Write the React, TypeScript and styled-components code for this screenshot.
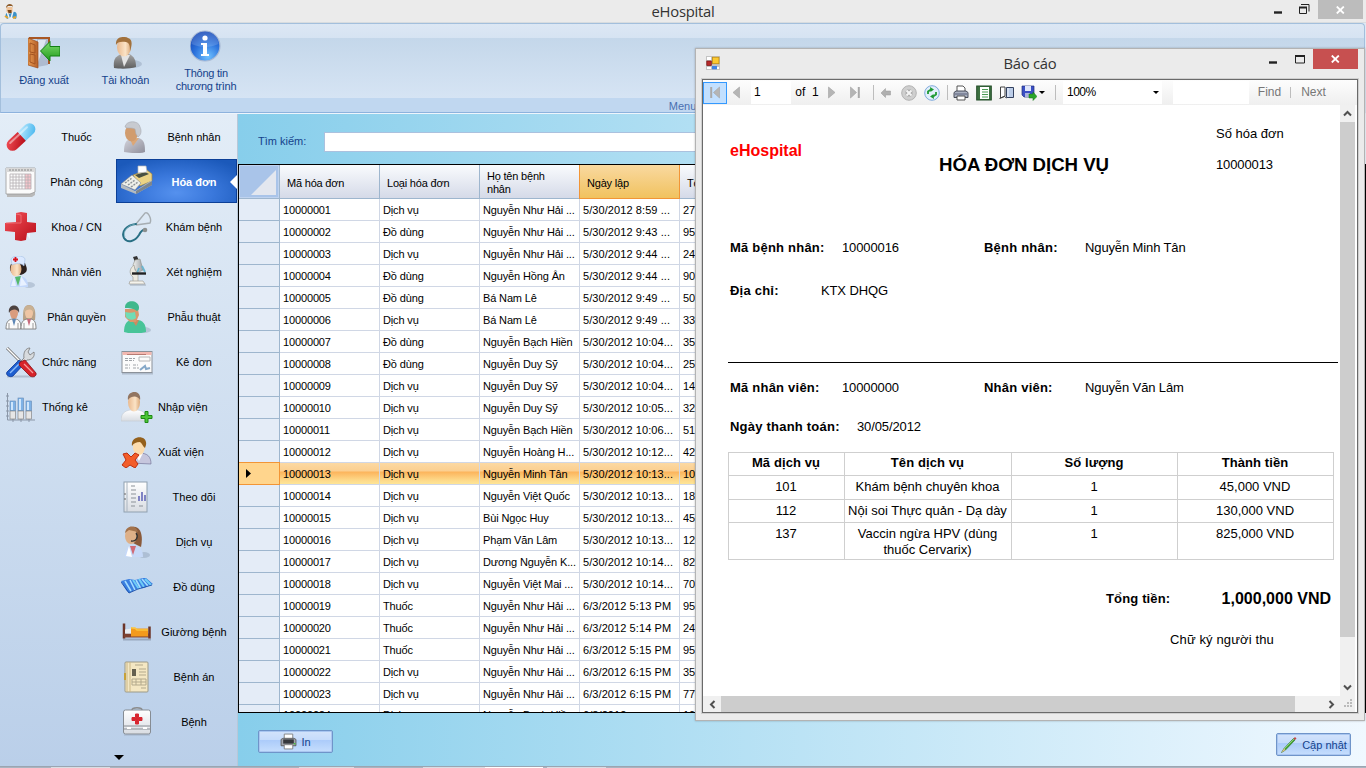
import React from 'react';
import styled, { createGlobalStyle, css } from 'styled-components';

const Global = createGlobalStyle`
  *, *::before, *::after { box-sizing: border-box; }
  html, body { margin: 0; padding: 0; overflow: hidden; }
  body { font: 11px/13px "Liberation Sans", Arial, sans-serif; color: #000; }
  svg { display: block; flex: none; }
`;

/* ---------- shell ---------- */
const Shell = styled.div`
  position: relative;
  width: 1366px;
  height: 768px;
  display: flex;
  flex-direction: column;
  overflow: hidden;
  background: #dfe9f5;
`;
const TitleBar = styled.header`
  height: 23px;
  flex: none;
  display: grid;
  grid-template-columns: 140px 1fr 140px;
  background: #ebebeb;
  border-bottom: 1px solid #d8dcdf;
`;
const TitleText = styled.h1<{ $line?: number }>`
  margin: 0;
  font: 400 14.8px/${p => p.$line ?? 23}px "Open Sans", "Noto Sans", sans-serif;
  letter-spacing: -0.25px;
  text-align: center;
  color: #333;
`;
const AppIconSlot = styled.div<{ $top?: number }>`
  padding: ${p => p.$top ?? 3}px 0 0 4px;
`;
const WinButtons = styled.div`
  display: flex;
  justify-content: flex-end;
`;
const CloseBox = styled.div<{ $bg: string; $w: number; $h: number }>`
  width: ${p => p.$w}px;
  height: ${p => p.$h}px;
  background: ${p => p.$bg};
  display: flex;
  align-items: center;
  justify-content: center;
`;
const WinGlyph = styled.div<{ $w: number; $pt: number }>`
  width: ${p => p.$w}px;
  padding-top: ${p => p.$pt}px;
  display: flex;
  justify-content: center;
`;

/* ---------- ribbon ---------- */
const Ribbon = styled.nav`
  height: 90px;
  flex: none;
  margin-right: 1px;
  border: 1px solid #a3bfdc;
  border-bottom-color: #8db2dd;
  border-radius: 4px 4px 0 0;
  display: flex;
  flex-direction: column;
  background: linear-gradient(#dce7f4 0, #d6e3f2 14px, #c4d7ea 14px, #d6e4f4 74px);
`;
const RibbonItems = styled.div`
  flex: 1;
  display: flex;
  padding-left: 2px;
`;
const RibbonButton = styled.div<{ $w: number; $top: number; $tight?: boolean }>`
  width: ${p => p.$w}px;
  padding-top: ${p => p.$top}px;
  display: flex;
  flex-direction: column;
  align-items: center;
  gap: 5px;
  color: #15428b;
  font-size: 11px;
  text-align: center;
  white-space: pre;
  letter-spacing: ${p => (p.$tight ? -0.25 : -0.05)}px;
`;
const RibbonCaption = styled.div`
  height: 14px;
  background: #c0d7f0;
  color: #4a6fb0;
  text-align: center;
  font-size: 11px;
  line-height: 16px;
`;

/* ---------- body ---------- */
const Body = styled.div`
  flex: 1;
  min-height: 0;
  display: flex;
  border-top: 1px solid #eef5fc;
`;
const Sidebar = styled.aside`
  width: 237px;
  flex: none;
  display: flex;
  flex-direction: column;
  background: linear-gradient(#e3edf7, #bacfe9);
`;
const NavColumns = styled.div`
  display: grid;
  grid-template-columns: 116px 121px;
  align-items: start;
`;
const NavColumn = styled.ul`
  margin: 0;
  padding: 0;
  list-style: none;
`;
const NavItem = styled.li<{ $active?: boolean }>`
  position: relative;
  height: 45px;
  display: flex;
  align-items: center;
  padding-left: 5px;
  white-space: nowrap;
  border: 1px solid transparent;
  border-left: 0;
  ${p => p.$active && css`
    color: #fff;
    font-weight: 700;
    height: 44px;
    margin-bottom: 1px;
    border: 1px solid #0b3f97;
    padding-left: 4px;
    background: radial-gradient(ellipse 80px 38px at 50% 78%, #5591ee, #3a78dc 45%, #1b59ba);
  `}
`;
const NavLabel = styled.span<{ $left?: boolean; $second?: boolean }>`
  width: ${p => (p.$second ? 72 : 69)}px;
  margin-left: 5px;
  padding-top: 2px;
  display: flex;
  justify-content: ${p => (p.$left ? 'flex-start' : 'center')};
`;
const ActivePointer = styled.i`
  position: absolute;
  right: -1px;
  top: 15px;
  border: 7px solid transparent;
  border-left: 0;
  border-right: 7px solid #fff;
`;
const MoreArrow = styled.i`
  margin: 11px 0 0 114px;
  width: 0;
  border: 5px solid transparent;
  border-bottom: 0;
  border-top-color: #000;
`;

const Main = styled.main`
  flex: 1;
  min-width: 0;
  display: flex;
  flex-direction: column;
  border-left: 1px solid #b8c8d8;
  background: linear-gradient(90deg, #87ceeb, #f0f8ff);
`;
const SearchBar = styled.div`
  height: 50px;
  flex: none;
  display: flex;
  align-items: center;
  padding: 6px 0 1px 20px;
  color: #15428b;
`;
const SearchLabel = styled.label`
  width: 66px;
`;
const SearchInput = styled.div`
  width: 700px;
  height: 20px;
  background: #fff;
  border: 1px solid #abc1de;
`;
const Grid = styled.section`
  height: 549px;
  flex: none;
  border: 1px solid #000;
  background: #fff;
  overflow: hidden;
`;
const GridRow = styled.div<{ $sel?: boolean }>`
  display: grid;
  grid-template-columns: 41px 100px 100px 100px 100px 1fr;
  height: 22px;
  background: ${p => (p.$sel
    ? 'linear-gradient(#fcd9a3 0, #fbcf90 8px, #fcb45c 9px, #fdd889 17px, #fee596 21px)'
    : '#fff')};
`;
const GridHead = styled(GridRow)`
  height: 34px;
`;
const HeadCell = styled.div<{ $hot?: boolean }>`
  display: flex;
  align-items: center;
  padding: 3px 0 0 7px;
  line-height: 13px;
  letter-spacing: -0.2px;
  border-right: 1px solid #9eb6ce;
  border-bottom: 1px solid #9eb6ce;
  background: linear-gradient(#f9fbfd, #d5dae8);
  ${p => p.$hot && css`
    border-color: #f29536;
    background: linear-gradient(#f9d9a0, #f1c25f);
    box-shadow: -1px 0 #f29536;
  `}
`;
const CornerCell = styled.div`
  background: #a9c4e9;
  border: solid #9eb6ce;
  border-width: 0 1px 1px 0;
  box-shadow: inset 0 0 0 1px #bfd3ef;
  padding: 5px 0 0 12px;
`;
const RowHandle = styled.div<{ $sel?: boolean }>`
  background: ${p => (p.$sel ? '#ffd58d' : '#e4ecf7')};
  border: solid ${p => (p.$sel ? '#f29536' : '#9eb6ce')};
  border-width: 0 1px 1px 0;
  box-shadow: ${p => (p.$sel ? '0 -1px #f29536' : 'none')};
  display: flex;
  align-items: center;
  padding-left: 7px;
`;
const Cell = styled.div<{ $ls?: number }>`
  padding: 5px 0 0 3px;
  line-height: 13px;
  border: solid #d0d7e5;
  border-width: 0 1px 1px 0;
  overflow: hidden;
  white-space: nowrap;
  letter-spacing: ${p => p.$ls ?? -0.14}px;
  ${GridRow}:last-child > & { padding-top: 4px; }
`;
const BottomBar = styled.div`
  flex: 1;
  display: flex;
  justify-content: space-between;
  align-items: flex-start;
  padding: 17px 15px 0 20px;
`;
const BlueButton = styled.div<{ $w: number; $down?: number }>`
  width: ${p => p.$w}px;
  height: 23px;
  margin-top: ${p => p.$down ?? 0}px;
  border: 1px solid #6f94c9;
  border-radius: 2px;
  box-shadow: inset 0 0 0 1px #a9c6f0;
  background: linear-gradient(#d3e3fb 0, #c5dbfb 9px, #abcbfa 9px, #c6defd);
  color: #15428b;
  line-height: 15px;
  display: flex;
  align-items: center;
  justify-content: center;
  gap: 4px;
`;
const ButtonLabel = styled.span`
  padding-top: 2px;
`;
const StatusStrip = styled.footer`
  height: 2px;
  flex: none;
  border-top: 1px solid #9ba5b1;
  background: linear-gradient(90deg, #aab4c0 51px, #d9dee4 51px 110px, #aab4c0 110px 299px, #d9dee4 299px 354px, #aab4c0 354px 423px, #d9dee4 423px 485px, #fff 485px 543px, #aab4c0 543px 547px, #d9dee4 547px 606px, #aab4c0 606px);
`;

/* ---------- report window ---------- */
const Dialog = styled.section`
  position: absolute;
  left: 695px;
  top: 48px;
  width: 670px;
  height: 673px;
  display: flex;
  flex-direction: column;
  padding: 0 6px 7px 6px;
  background: #ebebeb;
  border: 1px solid #b3b3b3;
  box-shadow: 0 0 2px rgba(0, 0, 0, 0.25);
`;
const DialogTitle = styled.div`
  height: 30px;
  flex: none;
  display: grid;
  grid-template-columns: 118px 1fr 118px;
`;
const Viewer = styled.div`
  flex: 1;
  min-height: 0;
  display: flex;
  flex-direction: column;
  border: 1px solid #6a6a6a;
  box-shadow: 0 0 0 1px #cfcfcf;
  background: #fff;
`;
const Toolbar = styled.div`
  height: 25px;
  flex: none;
  display: flex;
  align-items: center;
  font-size: 12px;
  background: linear-gradient(#fdfdfd, #efefef);
`;
const ToolSlot = styled.div<{ $w: number; $on?: boolean; $muted?: boolean }>`
  width: ${p => p.$w}px;
  height: 22px;
  flex: none;
  display: flex;
  align-items: center;
  justify-content: center;
  color: ${p => (p.$muted ? '#777' : '#000')};
  white-space: pre;
  ${p => p.$on && css`
    border: 1px solid #3399ff;
    background: #c2e0ff;
  `}
`;
const ToolField = styled.div<{ $w: number; $pad?: number }>`
  width: ${p => p.$w}px;
  height: 23px;
  flex: none;
  background: #fff;
  padding: 0 3px 0 ${p => p.$pad ?? 4}px;
  display: flex;
  align-items: center;
  justify-content: space-between;
  letter-spacing: -0.5px;
`;
const ToolGap = styled.div<{ $w: number }>`
  width: ${p => p.$w}px;
  flex: none;
`;
const ToolSep = styled.div<{ $m?: string; $h?: number }>`
  width: 1px;
  height: ${p => p.$h ?? 15}px;
  flex: none;
  margin: ${p => p.$m ?? '0'};
  background: #bdbdbd;
`;
const ViewArea = styled.div`
  flex: 1;
  min-height: 0;
  display: grid;
  grid-template-columns: 1fr 15px;
  grid-template-rows: 1fr 16px;
  padding-right: 2px;
`;
const VScroll = styled.div`
  background: #f0f0f0;
  display: grid;
  grid-template-rows: 17px 515px 1fr 17px;
  justify-items: center;
  align-items: center;
`;
const HScroll = styled.div`
  background: #f0f0f0;
  display: grid;
  grid-template-columns: 18px 574px 1fr 17px;
  align-items: center;
  justify-items: center;
`;
const Thumb = styled.div`
  width: 100%;
  height: 100%;
  background: #cdcdcd;
`;
const GripCorner = styled.div`
  background: #f0f0f0;
  padding: 3px 0 0 4px;
`;

const Page = styled.article`
  padding: 0 2px 0 25px;
  font-size: 13px;
  line-height: 16px;
  overflow: hidden;
`;
const PageHead = styled.div`
  height: 135px;
  display: grid;
  grid-template-columns: 209px 277px 1fr;
  padding-left: 2px;
`;
const Brand = styled.div`
  padding-top: 38px;
  color: #f00;
  font-size: 16px;
  font-weight: 700;
`;
const ReportTitle = styled.h2`
  margin: 50px 0 0;
  font-size: 18.67px;
  line-height: 20px;
  font-weight: 700;
  letter-spacing: -0.05px;
  white-space: nowrap;
`;
const InvoiceNo = styled.div`
  padding-top: 21px;
  display: flex;
  flex-direction: column;
  gap: 15px;
`;
const Fields = styled.div<{ $h: number }>`
  height: ${p => p.$h}px;
  padding-left: 2px;
  display: flex;
  align-items: flex-start;
`;
const FieldLabel = styled.b<{ $w: number }>`
  width: ${p => p.$w}px;
  letter-spacing: 0.22px;
  white-space: nowrap;
`;
const FieldValue = styled.span<{ $w?: number }>`
  width: ${p => (p.$w ? p.$w + 'px' : 'auto')};
  letter-spacing: -0.12px;
  white-space: nowrap;
`;
const Rule = styled.hr`
  height: 1px;
  margin: 0 0 17px;
  border: 0;
  background: #000;
`;
const Table = styled.div`
  width: 605px;
  box-sizing: content-box;
  display: grid;
  grid-template-columns: 116px 167px 166px 156px;
  grid-template-rows: 23px 24px 23px 37px;
  border: solid #cfcfcf;
  border-width: 1px 0 0 1px;
`;
const TCell = styled.div<{ $head?: boolean }>`
  padding: ${p => (p.$head ? 2 : 3)}px 2px 0 1px;
  text-align: center;
  border: solid #cfcfcf;
  border-width: 0 1px 1px 0;
  font-weight: ${p => (p.$head ? 700 : 400)};
  letter-spacing: ${p => (p.$head ? 0.1 : 0)}px;
  white-space: pre;
`;
const TotalRow = styled.div`
  display: flex;
  justify-content: space-between;
  align-items: center;
  margin: 29px 7px 0 378px;
  height: 20px;
  font-weight: 700;
`;
const TotalLabel = styled.span`
  letter-spacing: 0.15px;
`;
const TotalValue = styled.span`
  font-size: 16px;
`;
const Signature = styled.div`
  margin: 23px 0 0 442px;
  letter-spacing: 0.13px;
`;

/* ---------- drawings ---------- */
type G = { children: React.ReactNode; s?: number; vb?: number };
const Pic = ({ children, s = 32, vb = 32 }: G) => (
  <svg width={s} height={s} viewBox={`0 0 ${vb} ${vb}`} fill="none">{children}</svg>
);

const HiddenSvg = styled.svg`
  position: absolute;
`;
const Defs = () => (
  <HiddenSvg width="0" height="0">
    <defs>
      <linearGradient id="red" x1="0" y1="0" x2="1" y2="1"><stop stopColor="#f4525a" /><stop offset="1" stopColor="#b80d18" /></linearGradient>
      <linearGradient id="skin" x1="0" y1="0" x2="1" y2="0"><stop stopColor="#e9b98e" /><stop offset=".6" stopColor="#fbe3c6" /><stop offset="1" stopColor="#dba878" /></linearGradient>
      <linearGradient id="white" x1="0" y1="0" x2="0" y2="1"><stop stopColor="#fff" /><stop offset="1" stopColor="#d8dce2" /></linearGradient>
      <linearGradient id="grey" x1="0" y1="0" x2="1" y2="1"><stop stopColor="#d4d4dc" /><stop offset="1" stopColor="#8f8f9c" /></linearGradient>
      <linearGradient id="suit" x1="0" y1="0" x2="0" y2="1"><stop stopColor="#a6a6a6" /><stop offset="1" stopColor="#5e5e5e" /></linearGradient>
      <linearGradient id="sky" x1="0" y1="0" x2="1" y2="1"><stop stopColor="#c6eeff" /><stop offset="1" stopColor="#3fb3ee" /></linearGradient>
      <linearGradient id="green" x1="0" y1="0" x2="0" y2="1"><stop stopColor="#7fdc6c" /><stop offset="1" stopColor="#1f9a1c" /></linearGradient>
      <linearGradient id="door" x1="0" y1="0" x2="1" y2="0"><stop stopColor="#e89a50" /><stop offset="1" stopColor="#b5602a" /></linearGradient>
      <radialGradient id="info" cx=".6" cy=".85" r=".9"><stop stopColor="#6fc0ff" /><stop offset=".5" stopColor="#2d74dd" /><stop offset="1" stopColor="#0d3db0" /></radialGradient>
      <linearGradient id="steel" x1="0" y1="0" x2="1" y2="0"><stop stopColor="#f2f2ee" /><stop offset="1" stopColor="#9aa0a6" /></linearGradient>
    </defs>
  </HiddenSvg>
);

const ExitIcon = () => (
  <Pic>
    <path d="M1 1h20v26" stroke="#a85724" strokeWidth="2" />
    <path d="M9 2h11v26l-11 2z" fill="#aebbd0" /><path d="M10 3l8 0-8 22z" fill="#dfe6f0" />
    <path d="M0 1l10 4v26L0 28z" fill="url(#door)" stroke="#9b4e1e" strokeWidth=".7" />
    <path d="M2 6l5 2v8l-5-1zM2 17l5 1v9l-5-2z" stroke="#a45422" strokeWidth="1" />
    <path d="M12.500 14L22 4.500v5h10v9.500H22v5z" fill="url(#green)" stroke="#128012" strokeWidth="1" />
  </Pic>
);
const UserIcon = () => (
  <Pic>
    <ellipse cx="22" cy="27" rx="10" ry="4" fill="#8898b0" opacity=".4" />
    <path d="M4 31c-1-8 1-12 8-14h7c5 2 7 6 7 13-6 2-16 2-22 1z" fill="url(#suit)" />
    <path d="M11 18l3 12 6-12z" fill="#e4e4e4" />
    <ellipse cx="14" cy="10" rx="7" ry="9.500" fill="url(#skin)" />
    <path d="M6 8C5-1 15-1 18 1c5 1 4 8 2 13 0-4 0-8-4-9C11 4 7 5 6 8z" fill="#a2713c" />
  </Pic>
);
const InfoIcon = () => (
  <Pic>
    <circle cx="15" cy="16" r="15" fill="url(#info)" stroke="#a8b9d4" strokeWidth="1.200" />
    <path d="M1.500 14a13.500 12.500 0 0127 0c-9 4-18 4-27 0z" fill="#fff" opacity=".16" />
    <circle cx="15" cy="8" r="2.600" fill="#fff" />
    <path d="M11 13h6v11h2v2h-8v-2h2v-9h-2z" fill="#fff" />
  </Pic>
);
const PillIcon = () => (
  <Pic>
    <g transform="rotate(-43 16 16)">
      <path d="M16 10h11.500a6 6 0 010 12H16z" fill="url(#sky)" />
      <path d="M17 10H4.500a6 6 0 000 12h12.500z" fill="url(#red)" />
      <path d="M4 13h23" stroke="#fff" strokeWidth="2" opacity=".45" strokeLinecap="round" />
    </g>
  </Pic>
);
const CalendarIcon = () => (
  <Pic>
    <path d="M2 3h28v26l-3 2H2z" fill="#b9b9b9" />
    <path d="M1 2h29v24l-5 2H1z" fill="#fbfbfb" stroke="#999" strokeWidth=".8" />
    <path d="M1 2h29v4H1z" fill="#d9d9d9" /><path d="M4 4h23" stroke="#888" strokeDasharray="2 1" />
    <path d="M20 8h6v15h-6z" fill="#f7c6cc" />
    <path d="M5 8h21v15H5zM5 11h21M5 14h21M5 17h21M5 20h21M8 8v15M11 8v15M14 8v15M17 8v15M20 8v15M23 8v15" stroke="#b5b0b4" strokeWidth=".8" />
  </Pic>
);
const CrossIcon = () => (
  <Pic>
    <path d="M11 2l5-1 6 1v9l9 1v9l-9 1-1 7-5 1-6-1v-8l-10-1V12l11-1z" fill="url(#red)" />
    <path d="M11 3l5 1v8L1 12" stroke="#f0797d" strokeWidth=".8" />
    <path d="M22 24l3-2v6z" fill="#fff" opacity=".5" />
  </Pic>
);
const NurseIcon = () => (
  <Pic>
    <ellipse cx="24" cy="29" rx="6" ry="3" fill="#8898b0" opacity=".4" />
    <path d="M13 7h7c1 3 3 6 1 9-3 3-6 3-9 3z" fill="#2c201d" /><path d="M6 8c-2 4-1 7 1 9h4V8z" fill="#4a362c" />
    <ellipse cx="11" cy="13" rx="5.500" ry="7.500" fill="url(#skin)" />
    <path d="M6 3c2-4 13-4 14 0l-1 7c-3-3-8-3-12-1z" fill="#dbe9ff" stroke="#a5c0e4" strokeWidth=".6" />
    <path d="M10.500 1v5M8 3.500h5" stroke="#d8131c" strokeWidth="1.800" />
    <path d="M5 31c0-7 3-10 8-11 8 0 10 4 10 11z" fill="#c3d8fb" />
    <path d="M10 21l3 9 3-10z" fill="#55b96c" /><path d="M9 20l-3 10h5zM16 20l6 9-7 1z" fill="#e8f1ff" />
  </Pic>
);
const TeamIcon = () => (
  <Pic>
    {[0, 15].map((x, i) => (
      <g key={x} transform={`translate(${x} 1)`}>
        {i === 1 && <path d="M3 18c0-8 0-15 6-15s7 7 6 15z" fill="#b9a287" />}
        <ellipse cx="9" cy="11" rx="4" ry="6" fill={i ? '#eec5a4' : '#d99c7e'} />
        <path d="M4 11C2 1 16 1 14 11c-1-4-7-5-10 0z" fill={i ? '#c9b193' : '#4d4341'} />
        <path d="M1 27c0-7 2-9 6-10h4c4 1 5 4 5 10z" fill="#fbfbfb" stroke="#70706e" strokeWidth=".8" />
        <path d="M7 17l2 7 2-7z" fill={i ? '#c86a7c' : '#5d86b5'} /><path d="M4 21v6M13 21v6" stroke="#999" />
      </g>
    ))}
  </Pic>
);
const ToolsIcon = () => (
  <Pic>
    <path d="M2 30.500h28" stroke="#7f8da2" strokeWidth="2" opacity=".4" />
    <path d="M2 2l15 15" stroke="#707070" strokeWidth="3" /><path d="M2 2l15 15" stroke="#fff" strokeWidth="1.400" />
    <path d="M15 16l4-4c-1-6 2-10 6-10l-2 4 2 3 4-3c1 5-2 8-7 8l-5 5z" fill="#d8dbde" stroke="#777" strokeWidth=".8" />
    <path d="M14 14l5 4L8 30c-3 2-8-1-6-4z" fill="#1e5fd0" stroke="#0e3796" strokeWidth=".8" /><path d="M14 18L5 27" stroke="#8dbcf8" strokeWidth="1.400" />
    <path d="M15 16l5-2 11 13c1 3-3 5-6 3L14 19z" fill="#d7232a" stroke="#851318" strokeWidth=".8" /><path d="M19 18l9 9" stroke="#f69a9a" strokeWidth="1.300" />
  </Pic>
);
const ChartIcon = () => (
  <Pic>
    <path d="M2.500 2v27H30M1 5h3M1 10h3M1 15h3M1 20h3M1 25h3M8 28v3M16 28v3M24 28v3" stroke="#8b97a8" />
    {[[5, 10], [13, 7], [21, 10]].map(([x, y]) => (
      <g key={x}>
        <rect x={x} y={y} width="5.500" height={20 - y} fill="#7fb2e6" stroke="#6389b4" strokeWidth=".6" />
        <rect x={x + 1} y={y + 1} width="2" height={18 - y} fill="#cfe6fc" />
        <rect x={x} y="20" width="5.500" height="8" fill="#e6e6e6" stroke="#777" strokeWidth=".6" />
      </g>
    ))}
  </Pic>
);
const PatientIcon = () => (
  <Pic>
    <path d="M3 31c0-8 2-13 7-13l8-1c6 2 6 8 6 14-6 2-15 1-21 0z" fill="url(#grey)" />
    <path d="M9 18l3 7 6-8z" fill="#dca777" />
    <ellipse cx="10.500" cy="12" rx="6.500" ry="8.500" fill="#d19c6e" />
    <path d="M4 6c1-7 14-7 15 0 2 4 1 8-2 10l-2-3-1-5C10 6 7 8 4 6z" fill="#c7cad0" stroke="#a7abb4" strokeWidth=".6" />
  </Pic>
);
const RegisterIcon = () => (
  <Pic>
    <path d="M12 10l14-5 5 4v7L19 21z" fill="#ecd384" stroke="#9d8444" strokeWidth=".7" />
    <path d="M14 10l10-3 4 2-10 4z" fill="#4a5142" />
    <path d="M17 1l8 0 1 6-9 1z" fill="#fff" stroke="#b9b9b9" strokeWidth=".7" />
    <path d="M0 19l11-9 9 8-6 7z" fill="#eef0ea" stroke="#888" strokeWidth=".6" />
    <path d="M0 19l14 7 17-11v5L15 29 0 23z" fill="#b4bbc0" />
    <path d="M4 18l7-5M7 20l7-5M10 22l7-5" stroke="#8c9398" strokeDasharray="2 1" strokeWidth="1.500" />
    <path d="M15 26l16-10v4L15 29z" fill="#7c858e" />
  </Pic>
);
const StethoscopeIcon = () => (
  <Pic>
    <path d="M15 13L24 2c3-2 7 6 5 10l-14 2" stroke="#a6adb2" strokeWidth="1.400" />
    <path d="M15 13C5 14 0 21 3 27c4 6 11 3 15-3 2-4 3-5 5-5" stroke="#286f84" strokeWidth="2" strokeLinecap="round" />
    <path d="M14 13C5 15 2 21 4 26" stroke="#7db5c2" strokeWidth=".7" />
    <circle cx="24" cy="19" r="2.300" fill="#8c8f8e" />
  </Pic>
);
const MicroscopeIcon = () => (
  <Pic>
    <path d="M12 1l4-1 2 5-4 1z" fill="#333" /><path d="M14 4l5-1 3 11-6 3-4-8z" fill="url(#steel)" stroke="#8d8d85" strokeWidth=".6" />
    <path d="M21 10l3 6M18 12l-2 5" stroke="#6bb6d0" strokeWidth="1.800" />
    <path d="M13 9c-5 4-5 9-1 12v5h5v-8l-3-4z" fill="#eceae0" stroke="#97958c" strokeWidth=".6" />
    <path d="M11 17.500h14" stroke="#222" strokeWidth="2.400" /><path d="M9 25h13l2 3H8z" fill="#f4f3ec" stroke="#a09f98" strokeWidth=".7" />
    <path d="M9 29h16" stroke="#7f8996" opacity=".6" />
  </Pic>
);
const SurgeonIcon = () => (
  <Pic>
    <ellipse cx="23" cy="29" rx="7" ry="3" fill="#8898b0" opacity=".4" />
    <path d="M3 31c0-8 3-12 8-12h6c7 1 8 7 8 12-7 2-16 2-22 0z" fill="#48c498" />
    <path d="M11 19h7l-3 6z" fill="#cc8a60" />
    <path d="M4 8h13l1 6-3 7H9l-5-5z" fill="#d8986c" />
    <path d="M4 11c4 1 7 1 10 0l1 6c-3 3-8 2-10-1z" fill="#6fdcb6" />
    <path d="M4 6C5-2 17-1 18 6c0 2 0 3-2 4C12 7 8 7 4 7z" fill="#3fb88c" />
  </Pic>
);
const PrescriptionIcon = () => (
  <Pic>
    <path d="M1 27.500h31" stroke="#8e99a8" strokeWidth="2" opacity=".5" />
    <rect x="1" y="5.500" width="30" height="21" fill="#fbfbfb" stroke="#8b9199" />
    <path d="M1.500 6h29v3h-29z" fill="#f3b8b0" /><path d="M6 8.500h19" stroke="#b77b73" />
    <path d="M4 12.500h10M4 14.500h9M4 19h5M4 22h5M12 19h5M12 22h6" stroke="#9fa3a8" strokeDasharray="3 1" />
    <path d="M18 11h11v4H18z" stroke="#b6b6b6" /><path d="M19 24l5-4 1 3 4-1" stroke="#85a8c8" strokeWidth="2" />
  </Pic>
);
const AdmitIcon = () => (
  <Pic>
    <path d="M0 30c0-8 4-10 9-11h8c6 1 8 4 9 11z" fill="url(#white)" stroke="#c5c9d0" strokeWidth=".6" />
    <ellipse cx="13" cy="11" rx="6" ry="9.500" fill="url(#skin)" />
    <path d="M7 9C5-1 21-2 19 9c-2-4-8-5-12 0z" fill="#927561" />
    <path d="M24 20.500h3v4h4v3h-4v4h-3v-4h-4v-3h4z" fill="#4cc436" stroke="#1d8a13" />
  </Pic>
);
const DischargeIcon = () => (
  <Pic>
    <path d="M10 27c-1-7 3-9 8-10 9 0 12 4 12 11z" fill="#c6c6dd" stroke="#75759a" strokeWidth=".7" />
    <path d="M14 18l4 7 4-8z" fill="#fff" />
    <ellipse cx="18" cy="11" rx="6" ry="8" fill="#fcdcae" />
    <path d="M11 10C9-1 27-2 25 9l-1 3c-2-1-3-5-5-6-4 0-6 1-8 4z" fill="#94601c" />
    <path d="M2 18l4-1 4 4 4-4 4 2-4 5 3 4-3 4-5-3-4 3-4-3 4-5z" fill="#f25d2a" stroke="#c02f0e" />
  </Pic>
);
const TrackIcon = () => (
  <Pic>
    <rect x="3" y="1" width="23" height="30" fill="url(#white)" stroke="#8fa0af" />
    <path d="M6 1v30" stroke="#a9b4bf" /><path d="M10 5h4M10 9h5M10 13h5M10 17h5M10 21h5M10 25h4M18 25h4" stroke="#8b9198" />
    <path d="M18 15v5M21 11v9M24 14v6" stroke="#7f83c4" strokeWidth="2" /><path d="M4 12v2M4 17v2" stroke="#666" />
  </Pic>
);
const ServiceIcon = () => (
  <Pic>
    <ellipse cx="23" cy="29" rx="6" ry="3" fill="#8898b0" opacity=".4" />
    <path d="M8 2c10-5 15 5 12 19l-8-4z" fill="#8a5a3a" />
    <ellipse cx="10" cy="10" rx="6" ry="8" fill="#deb088" />
    <path d="M4 7C5-1 15-2 17 6L8 4z" fill="#a3734c" /><path d="M15 7c3 4 0 9-5 8" stroke="#333" strokeWidth="1.300" />
    <path d="M4 31c0-8 2-11 7-12 8 1 11 5 11 12z" fill="#c6d9f8" /><path d="M9 20l3 9 3-9z" fill="#d06a76" /><path d="M8 20l-3 10 6 1z" fill="#fff" />
  </Pic>
);
const SuppliesIcon = () => (
  <Pic>
    <path d="M0 10l8-2 6 1 8-2 3 0 7 6-9 4-7 1-8 4-3-3z" fill="#3a7fe0" />
    <path d="M4 10l6 10M9 9l5 10M15 9l5 9M21 8l6 7" stroke="#a4dcff" strokeWidth="1.600" /><path d="M12 9l6 9M18 8l5 8M24 8l6 6" stroke="#6fcdf6" strokeWidth="2" />
    <path d="M0 11l8 11 9-4 14-4" stroke="#1c4fa8" strokeWidth=".9" />
  </Pic>
);
const BedIcon = () => (
  <Pic>
    <path d="M2 23.500h28" stroke="#6f7c90" strokeWidth="2" opacity=".5" />
    <path d="M3 7.500v15M28.500 10.500v12" stroke="#6d3629" strokeWidth="2.500" /><path d="M3 17.500h25v4H3z" fill="#7d4131" />
    <path d="M4 13.500l7-1v5H4z" fill="#e9edf2" /><path d="M10 11.500l3 1h14v8H10z" fill="#f39a1d" /><path d="M10 12h4l2 2h11" stroke="#fcc53c" strokeWidth="1.500" />
  </Pic>
);
const RecordIcon = () => (
  <Pic>
    <rect x="4" y="1" width="23" height="30" rx="1" fill="#f4e7c3" stroke="#9b9988" />
    <path d="M6 1v30M9 1v30" stroke="#cbb887" /><path d="M3 12h2v7H3z" fill="#c6a13a" />
    <path d="M14 4h8M18 8h7M18 11h7M18 14h7" stroke="#b3a98c" /><path d="M11 8h4v7h-4z" fill="#65604f" />
    <path d="M11 18h14v6H11zM11 21h14M15 18v6M20 18v6M20 27h5" stroke="#b3a98c" />
  </Pic>
);
const KitIcon = () => (
  <Pic>
    <path d="M11 4c0-3 10-3 10 0" stroke="#8c8c8c" strokeWidth="1.500" />
    <rect x="2.500" y="4" width="27" height="24" rx="2" fill="url(#white)" stroke="#868c93" />
    <path d="M3 20h26M3 23h26" stroke="#8b9096" /><path d="M6 22h4M22 22h4" stroke="#fff" strokeWidth="2" />
    <path d="M14.500 8h3v3.500H21v3h-3.500V18h-3v-3.500H11v-3h3.500z" fill="#d82630" stroke="#d82630" /><path d="M3 29h26" stroke="#8e99a8" opacity=".5" />
  </Pic>
);
const PrinterIcon = ({ s = 17 }: { s?: number }) => (
  <Pic s={s} vb={16}>
    <path d="M4 1h8v5H4z" fill="#fff" stroke="#777" strokeWidth=".8" />
    <path d="M1 6l2-1h10l2 1v6H1z" fill="#a2a6ae" stroke="#555" strokeWidth=".8" /><path d="M3 6h10v4H3z" fill="#35373c" />
    <path d="M4 11h8v4H4z" fill="#fff" stroke="#777" strokeWidth=".8" /><path d="M13 9.500h1.500v1.200H13z" fill="#3fc72f" />
  </Pic>
);
const ViewerPrinterIcon = () => (
  <Pic s={16} vb={16}>
    <path d="M4 7V1h6l2 2v4z" fill="#fff" stroke="#444" strokeWidth=".9" />
    <path d="M1 7.500l2-1.500h10l2 1.500v5H1z" fill="#a9b0c0" stroke="#3a3f4d" strokeWidth=".9" /><path d="M2 9h12" stroke="#5a617a" />
    <path d="M4 11h8v4H4z" fill="#fff" stroke="#444" strokeWidth=".9" />
  </Pic>
);
const PencilIcon = () => (
  <Pic s={18} vb={18}>
    <path d="M1.500 16.500L4 12.500 13.500 2.500l1.500 1.500L5.500 14z" fill="#44a636" stroke="#28701f" strokeWidth=".6" />
    <path d="M4 13L14 3" stroke="#a4dc8a" strokeWidth=".8" /><path d="M13.500 2.500L15 1l1.500 1.500L15 4z" fill="#c24848" /><path d="M1.500 16.500L4 12.500l1.500 1.500z" fill="#e5bd83" />
  </Pic>
);
const AppIcon = () => (
  <Pic s={16} vb={16}>
    <path d="M3 16c-4-6 2-8 5-7 4-1 6 1 4 7l-5-2z" fill="#3c92c8" />
    <path d="M3 8l2 7M9 8l-2 8" stroke="#f5f5f5" strokeWidth="1.500" />
    <path d="M1 13l3 2M9 15l3-1" stroke="#e2a52c" strokeWidth="2" />
    <path d="M2.500 4h6v5l-3 2-3-2z" fill="#f0c49a" /><path d="M2 5c0-5 7-5 7-1L8 3H4z" fill="#8d5a28" /><path d="M3.500 7h4v3h-3z" fill="#7b4719" />
  </Pic>
);
const FormIcon = () => (
  <Pic s={14} vb={14}>
    <rect width="14" height="14" fill="#c4c4c4" /><path d="M1 1h4v3H1zM1 11h4v2H1zM11 11h2v2h-2z" fill="#fff" />
    <rect x=".800" y="5" width="4.500" height="4.500" fill="#b62a2a" stroke="#7b1111" strokeWidth=".7" />
    <rect x="6.500" y="1.200" width="6.500" height="6.500" fill="#fbc930" stroke="#c08a10" strokeWidth=".8" /><rect x="6" y="10" width="5" height="3.300" fill="#3f83e4" />
  </Pic>
);
const CloseX = () => (
  <svg width="9" height="8" viewBox="0 0 9 8"><path d="M.800.500l7 7M7.800.500l-7 7" stroke="#fff" strokeWidth="1.800" /></svg>
);
const Min = () => <svg width="8" height="3"><path d="M0 1.500h8" stroke="#222" strokeWidth="2.400" /></svg>;
const Max = () => <svg width="10" height="9" viewBox="0 0 10 9" fill="none"><path d="M.500 1h9v7h-9z" stroke="#222" /><path d="M0 1h10" stroke="#222" strokeWidth="2" /></svg>;
const Restore = () => <svg width="11" height="11" viewBox="0 0 11 11" fill="none"><path d="M.500 3.500h7v6h-7z" stroke="#222" /><path d="M0 3.500h8" stroke="#222" strokeWidth="2" /><path d="M2 .500h8v7" stroke="#222" /></svg>;

const Tri = ({ left, bar }: { left?: boolean; bar?: boolean }) => (
  <svg width="12" height="13" viewBox="0 0 12 13">
    <g transform={left ? 'translate(12 0) scale(-1 1)' : undefined}>
      <path d={bar ? 'M1.500 1l6 5.500-6 5.500z' : 'M2.500 1l6.500 5.500-6.500 5.500z'} fill="#b5b5b5" stroke="#a2a2a2" strokeWidth=".6" />
      {bar && <path d="M9.800 1v11" stroke="#a9a9a9" strokeWidth="2" />}
    </g>
  </svg>
);
const Chevron = ({ d }: { d: string }) => (
  <svg width="9" height="9" viewBox="0 0 9 9" fill="none"><path d={d} stroke="#505050" strokeWidth="2" /></svg>
);
const Caret = () => <svg width="6" height="3" viewBox="0 0 6 3"><path d="M0 0h6L3 3z" fill="#000" /></svg>;
const BackIcon = () => <svg width="10" height="10" viewBox="0 0 10 10"><path d="M0 5l4.500-4.500V3H9.500v4h-5v2.500z" fill="#b0b0b0" stroke="#999" strokeWidth=".5" /></svg>;
const StopIcon = () => <Pic s={16} vb={16}><circle cx="8" cy="8" r="7.300" fill="#cfcfcf" stroke="#b3b3b3" /><path d="M5.500 5.500l5 5M10.500 5.500l-5 5" stroke="#a8a8a8" strokeWidth="4" /><path d="M5.500 5.500l5 5M10.500 5.500l-5 5" stroke="#f4f4f4" strokeWidth="2" /></Pic>;
const RefreshIcon = () => <Pic s={16} vb={16}><circle cx="8" cy="8" r="7.300" fill="#e2effb" stroke="#7fa9dc" /><path d="M4 9V6.500L7 4.500M12 7v2.500L9 11.500" stroke="#1f9a34" strokeWidth="1.800" /><path d="M6 2l4 2.500L6.500 7zM10 14l-4-2.500L9.500 9z" fill="#1f9a34" /></Pic>;
const LayoutIcon = () => <Pic s={16} vb={16}><rect x=".700" y="1" width="14.600" height="14" fill="#3d7040" stroke="#234d28" /><path d="M4 2h9v12H4z" fill="#fff" /><path d="M6 4.500h6M6 7h6M6 9.500h6M6 12h6" stroke="#4b9c55" /></Pic>;
const SetupIcon = () => <Pic s={16} vb={16}><path d="M1.500 2H6v9l-4.500 2z" fill="#fff" stroke="#444" /><path d="M7.500 2.500h7v10h-7z" fill="#bccde8" stroke="#33415f" /><path d="M9 3v9" stroke="#eef4ff" /><path d="M.500 13.500l5-2 2 1.500" stroke="#444" /></Pic>;
const SaveIcon = () => <Pic s={16} vb={16}><path d="M1 1h12v11H3l-2-2z" fill="#3a4fc4" stroke="#22307f" strokeWidth=".7" /><path d="M4 1h6v5H4z" fill="#dfe6fb" /><path d="M4 8h5v4H4z" fill="#aab3dd" /><path d="M8 9h4V7l4 4.500-4 4V13H8z" fill="#2aa52a" stroke="#167016" strokeWidth=".5" /></Pic>;

/* ---------- data ---------- */
type Nav = [string, () => React.JSX.Element, boolean?];
const primaryNav: Nav[] = [
  ['Thuốc', PillIcon], ['Phân công', CalendarIcon], ['Khoa / CN', CrossIcon], ['Nhân viên', NurseIcon],
  ['Phân quyền', TeamIcon], ['Chức năng', ToolsIcon, true], ['Thống kê', ChartIcon, true],
];
const secondaryNav: Nav[] = [
  ['Bệnh nhân', PatientIcon], ['Hóa đơn', RegisterIcon], ['Khám bệnh', StethoscopeIcon], ['Xét nghiệm', MicroscopeIcon],
  ['Phẫu thuật', SurgeonIcon], ['Kê đơn', PrescriptionIcon], ['Nhập viện', AdmitIcon, true], ['Xuất viện', DischargeIcon, true],
  ['Theo dõi', TrackIcon], ['Dịch vụ', ServiceIcon], ['Đồ dùng', SuppliesIcon], ['Giường bệnh', BedIcon],
  ['Bệnh án', RecordIcon], ['Bệnh', KitIcon],
];
const invoices: string[][] = [
  ['Dịch vụ', 'Nguyễn Như Hải ...', '5/30/2012 8:59 ...', '27'],
  ['Đồ dùng', 'Nguyễn Như Hải ...', '5/30/2012 9:43 ...', '95'],
  ['Dịch vụ', 'Nguyễn Như Hải ...', '5/30/2012 9:44 ...', '24'],
  ['Đồ dùng', 'Nguyễn Hồng Ân', '5/30/2012 9:44 ...', '90'],
  ['Đồ dùng', 'Bá Nam Lê', '5/30/2012 9:49 ...', '50'],
  ['Dịch vụ', 'Bá Nam Lê', '5/30/2012 9:49 ...', '33'],
  ['Đồ dùng', 'Nguyễn Bạch Hiền', '5/30/2012 10:04...', '35'],
  ['Đồ dùng', 'Nguyễn Duy Sỹ', '5/30/2012 10:04...', '25'],
  ['Dịch vụ', 'Nguyễn Duy Sỹ', '5/30/2012 10:04...', '14'],
  ['Dịch vụ', 'Nguyễn Duy Sỹ', '5/30/2012 10:05...', '32'],
  ['Dịch vụ', 'Nguyễn Bạch Hiền', '5/30/2012 10:06...', '51'],
  ['Dịch vụ', 'Nguyễn Hoàng H...', '5/30/2012 10:12...', '42'],
  ['Dịch vụ', 'Nguyễn Minh Tân', '5/30/2012 10:13...', '10'],
  ['Dịch vụ', 'Nguyễn Việt Quốc', '5/30/2012 10:13...', '18'],
  ['Dịch vụ', 'Bùi Ngọc Huy', '5/30/2012 10:13...', '45'],
  ['Dịch vụ', 'Phạm Văn Lâm', '5/30/2012 10:13...', '12'],
  ['Dịch vụ', 'Dương Nguyễn K...', '5/30/2012 10:14...', '82'],
  ['Dịch vụ', 'Nguyễn Việt Mai ...', '5/30/2012 10:14...', '70'],
  ['Thuốc', 'Nguyễn Như Hải ...', '6/3/2012 5:13 PM', '95'],
  ['Thuốc', 'Nguyễn Như Hải ...', '6/3/2012 5:14 PM', '24'],
  ['Thuốc', 'Nguyễn Như Hải ...', '6/3/2012 5:15 PM', '95'],
  ['Dịch vụ', 'Nguyễn Như Hải ...', '6/3/2012 6:15 PM', '35'],
  ['Dịch vụ', 'Nguyễn Như Hải ...', '6/3/2012 6:15 PM', '77'],
  ['Dịch vụ', 'Nguyễn Bạch Hiền', '6/8/2012 ...', '10'],
];
const selectedRow = 12;
const services = [
  ['101', 'Khám bệnh chuyên khoa', '1', '45,000 VND'],
  ['112', 'Nội soi Thực quản - Dạ dày', '1', '130,000 VND'],
  ['137', 'Vaccin ngừa HPV (dùng\nthuốc Cervarix)', '1', '825,000 VND'],
];

const NavList = ({ items, second }: { items: Nav[]; second?: boolean }) => (
  <NavColumn>
    {items.map(([label, Icon, left]) => {
      const active = label === 'Hóa đơn';
      return (
        <NavItem key={label} $active={active}>
          <Icon />
          <NavLabel $left={left} $second={second}>{label}</NavLabel>
          {active && <ActivePointer />}
        </NavItem>
      );
    })}
  </NavColumn>
);

const ReportWindow = () => (
  <Dialog>
    <DialogTitle>
      <AppIconSlot $top={7}><FormIcon /></AppIconSlot>
      <TitleText $line={29}>Báo cáo</TitleText>
      <WinButtons>
        <WinGlyph $w={26} $pt={12}><Min /></WinGlyph>
        <WinGlyph $w={27} $pt={6}><Max /></WinGlyph>
        <CloseBox $bg="#c75050" $w={45} $h={20}><CloseX /></CloseBox>
      </WinButtons>
    </DialogTitle>
    <Viewer>
      <Toolbar>
        <ToolSlot $w={24} $on><Tri left bar /></ToolSlot>
        <ToolSlot $w={18}><Tri left /></ToolSlot>
        <ToolGap $w={6} />
        <ToolField $w={40} $pad={3}>1</ToolField>
        <ToolSlot $w={32}>{'of  1'}</ToolSlot>
        <ToolSlot $w={18}><Tri /></ToolSlot>
        <ToolSlot $w={27}><Tri bar /></ToolSlot>
        <ToolSep $m="0 7px 0 5px" />
        <ToolSlot $w={10}><BackIcon /></ToolSlot>
        <ToolSlot $w={36}><StopIcon /></ToolSlot>
        <ToolSlot $w={10}><RefreshIcon /></ToolSlot>
        <ToolSep $m="0 4px 0 10px" />
        <ToolSlot $w={18}><ViewerPrinterIcon /></ToolSlot>
        <ToolSlot $w={28}><LayoutIcon /></ToolSlot>
        <ToolSlot $w={18}><SetupIcon /></ToolSlot>
        <ToolGap $w={3} />
        <ToolSlot $w={20}><SaveIcon /></ToolSlot>
        <Caret />
        <ToolSep $m="0 7px 0 10px" />
        <ToolField $w={99}><span>100%</span><Caret /></ToolField>
        <ToolGap $w={11} />
        <ToolField $w={76} />
        <ToolSlot $w={41} $muted>Find</ToolSlot>
        <ToolSep $h={11} />
        <ToolSlot $w={45} $muted>Next</ToolSlot>
      </Toolbar>
      <ViewArea>
        <Page>
          <PageHead>
            <Brand>eHospital</Brand>
            <ReportTitle>HÓA ĐƠN DỊCH VỤ</ReportTitle>
            <InvoiceNo><span>Số hóa đơn</span><FieldValue>10000013</FieldValue></InvoiceNo>
          </PageHead>
          <Fields $h={43}>
            <FieldLabel $w={112}>Mã bệnh nhân:</FieldLabel><FieldValue $w={142}>10000016</FieldValue>
            <FieldLabel $w={101}>Bệnh nhân:</FieldLabel><FieldValue>Nguyễn Minh Tân</FieldValue>
          </Fields>
          <Fields $h={79}>
            <FieldLabel $w={91}>Địa chỉ:</FieldLabel><FieldValue>KTX DHQG</FieldValue>
          </Fields>
          <Rule />
          <Fields $h={39}>
            <FieldLabel $w={112}>Mã nhân viên:</FieldLabel><FieldValue $w={142}>10000000</FieldValue>
            <FieldLabel $w={101}>Nhân viên:</FieldLabel><FieldValue>Nguyễn Văn Lâm</FieldValue>
          </Fields>
          <Fields $h={33}>
            <FieldLabel $w={127}>Ngày thanh toán:</FieldLabel><FieldValue>30/05/2012</FieldValue>
          </Fields>
          <Table>
            {['Mã dịch vụ', 'Tên dịch vụ', 'Số lượng', 'Thành tiền'].map(h => <TCell key={h} $head>{h}</TCell>)}
            {services.flatMap(r => r.map((c, i) => <TCell key={r[0] + i}>{c}</TCell>))}
          </Table>
          <TotalRow><TotalLabel>Tổng tiền:</TotalLabel><TotalValue>1,000,000 VND</TotalValue></TotalRow>
          <Signature>Chữ ký người thu</Signature>
        </Page>
        <VScroll>
          <Chevron d="M1 6.500L4.500 3 8 6.500" /><Thumb /><i /><Chevron d="M1 2.500L4.500 6 8 2.500" />
        </VScroll>
        <HScroll>
          <Chevron d="M6.500 1L3 4.500 6.500 8" /><Thumb /><i /><Chevron d="M2.500 1L6 4.500 2.500 8" />
        </HScroll>
        <GripCorner>
          <svg width="9" height="9" viewBox="0 0 9 9"><path d="M6 0h2v2H6zM3 3h2v2H3zM6 3h2v2H6zM0 6h2v2H0zM3 6h2v2H3zM6 6h2v2H6z" fill="#bbb" /></svg>
        </GripCorner>
      </ViewArea>
    </Viewer>
  </Dialog>
);

export default function App() {
  return (
    <Shell>
      <Global />
      <Defs />
      <TitleBar>
        <AppIconSlot><AppIcon /></AppIconSlot>
        <TitleText>eHospital</TitleText>
        <WinButtons>
          <WinGlyph $w={26} $pt={11}><Min /></WinGlyph>
          <WinGlyph $w={27} $pt={4}><Restore /></WinGlyph>
          <CloseBox $bg="#bcbcbc" $w={45} $h={19}><CloseX /></CloseBox>
          <WinGlyph $w={3} $pt={0} />
        </WinButtons>
      </TitleBar>
      <Ribbon>
        <RibbonItems>
          <RibbonButton $w={82} $top={13}><ExitIcon />Đăng xuất</RibbonButton>
          <RibbonButton $w={81} $top={13}><UserIcon />Tài khoản</RibbonButton>
          <RibbonButton $w={80} $top={6} $tight><InfoIcon />{'Thông tin\nchương trình'}</RibbonButton>
        </RibbonItems>
        <RibbonCaption>Menu</RibbonCaption>
      </Ribbon>
      <Body>
        <Sidebar>
          <NavColumns>
            <NavList items={primaryNav} />
            <NavList items={secondaryNav} second />
          </NavColumns>
          <MoreArrow />
        </Sidebar>
        <Main>
          <SearchBar><SearchLabel>Tìm kiếm:</SearchLabel><SearchInput /></SearchBar>
          <Grid>
            <GridHead>
              <CornerCell><svg width="25" height="25"><path d="M25 0v25H0z" fill="#e3e7ef" /></svg></CornerCell>
              <HeadCell>Mã hóa đơn</HeadCell>
              <HeadCell>Loại hóa đơn</HeadCell>
              <HeadCell>Họ tên bệnh<br />nhân</HeadCell>
              <HeadCell $hot>Ngày lập</HeadCell>
              <HeadCell>Tổ</HeadCell>
            </GridHead>
            {invoices.map((r, i) => (
              <GridRow key={i} $sel={i === selectedRow}>
                <RowHandle $sel={i === selectedRow}>
                  {i === selectedRow && <svg width="5" height="9"><path d="M0 0l5 4.500L0 9z" fill="#000" /></svg>}
                </RowHandle>
                <Cell>{10000001 + i}</Cell>
                {r.map((c, j) => <Cell key={j} $ls={j === 2 ? 0.08 : undefined}>{c}</Cell>)}
              </GridRow>
            ))}
          </Grid>
          <BottomBar>
            <BlueButton $w={75}><PrinterIcon /><ButtonLabel>In</ButtonLabel></BlueButton>
            <BlueButton $w={75} $down={3}><PencilIcon /><ButtonLabel>Cập nhật</ButtonLabel></BlueButton>
          </BottomBar>
        </Main>
      </Body>
      <StatusStrip />
      <ReportWindow />
    </Shell>
  );
}
